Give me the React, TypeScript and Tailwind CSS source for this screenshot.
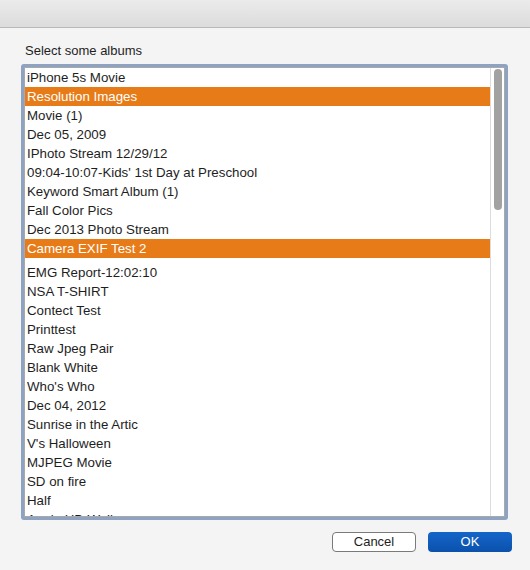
const albums = [
  "iPhone 5s Movie",
  "Resolution Images",
  "Movie (1)",
  "Dec 05, 2009",
  "IPhoto Stream 12/29/12",
  "09:04-10:07-Kids' 1st Day at Preschool",
  "Keyword Smart Album (1)",
  "Fall Color Pics",
  "Dec 2013 Photo Stream",
  "Camera EXIF Test 2",
];

const moreAlbums = [
  "EMG Report-12:02:10",
  "NSA T-SHIRT",
  "Contect Test",
  "Printtest",
  "Raw Jpeg Pair",
  "Blank White",
  "Who's Who",
  "Dec 04, 2012",
  "Sunrise in the Artic",
  "V's Halloween",
  "MJPEG Movie",
  "SD on fire",
  "Half",
  "Apple HD Wall",
  "Screenshots",
];

const selected = new Set(["Resolution Images", "Camera EXIF Test 2"]);

function Row({ name }: { name: string }) {
  const on = selected.has(name);
  return (
    <div
      className={`h-[19px] shrink-0 pl-[2px] text-[13.3px] leading-[19px] whitespace-nowrap ${
        on ? "bg-[#e77b18] text-white" : "text-[#1e1e1e]"
      }`}
    >
      {name}
    </div>
  );
}

export default function App() {
  return (
    <div className="flex h-[570px] w-[530px] flex-col overflow-hidden bg-[#f4f4f4] font-['Liberation_Sans',Arial,sans-serif] text-[13px]">
      {/* title bar */}
      <div className="h-[28px] shrink-0 border-b border-[#b9b9b9] bg-gradient-to-b from-[#ebebeb] to-[#dcdcdc]" />

      <div className="pt-[15px] pl-[25px] leading-[16px] text-[#1e1e1e]">Select some albums</div>

      {/* list box */}
      <div className="ml-[21px] mt-[5px] h-[456px] w-[487px] rounded-[3px] bg-[#8ea3c2] p-[3px]">
        <div className="flex h-full border border-[#a9a9a9] bg-white">
          <div className="flex flex-1 flex-col overflow-hidden">
            {albums.map((a) => (
              <Row key={a} name={a} />
            ))}
            <div className="h-[5px] shrink-0" />
            {moreAlbums.map((a) => (
              <Row key={a} name={a} />
            ))}
          </div>
          <div className="w-[14px] shrink-0 border-l border-[#dcdcdc] bg-white pt-[1px] pl-[3px]">
            <div className="h-[141px] w-[8px] rounded-full bg-[#a2a2a2]" />
          </div>
        </div>
      </div>

      {/* buttons */}
      <div className="mt-[12px] flex justify-end gap-[12px] pr-[18px]">
        <button className="h-[20px] w-[84px] rounded-[4px] border border-[#7a7a7a] bg-white text-[13px] leading-[18px] text-[#1e1e1e]">
          Cancel
        </button>
        <button className="h-[20px] w-[84px] rounded-[4px] bg-gradient-to-b from-[#1465c9] to-[#0b51ac] text-[13px] leading-[20px] text-white">
          OK
        </button>
      </div>
    </div>
  );
}
